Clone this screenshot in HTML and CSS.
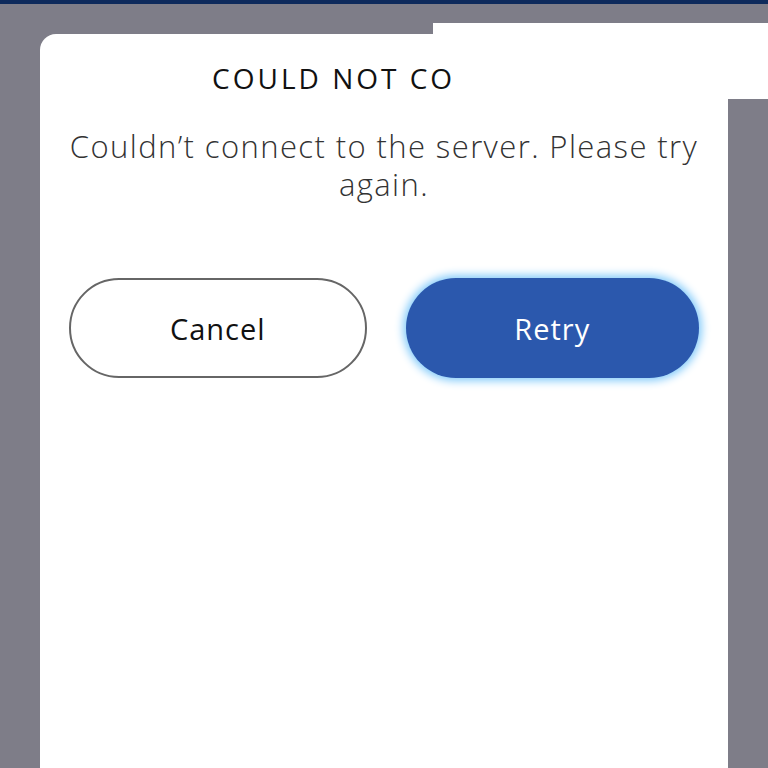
FILE: index.html
```html
<!DOCTYPE html>
<html lang="en">
<head>
<title>Connection error</title>
<meta charset="utf-8">
<meta name="viewport" content="width=device-width, initial-scale=1">
<link rel="stylesheet" href="styles.css">
</head>
<body>

<div class="topbar"></div>

<div class="dialog">
  <h2 class="dialog-title">COULD NOT CONNECT</h2>
  <p class="dialog-message">Couldn’t connect to the server. Please try again.</p>
  <div class="dialog-actions">
    <button class="btn btn-cancel" type="button">Cancel</button>
    <button class="btn btn-retry" type="button">Retry</button>
  </div>
</div>

<!-- white sheet sliding in behind the dialog -->
<div class="sheet"></div>

</body>
</html>
```

FILE: styles.css
```css
* {
  box-sizing: border-box;
}

body {
  font-family: "Open Sans", "Noto Sans", sans-serif;
  margin: 0;
  background-color: #7e7d88;
  overflow: hidden;
}

.topbar {
  height: 4px;
  background-color: #0e2a5c;
}

/* Dialog card */
.dialog {
  position: relative;
  z-index: 2;
  margin: 30px 40px 0;
  padding: 26px 29px 0;
  min-height: 734px;
  background-color: #fff;
  border-radius: 16px 16px 0 0;
  text-align: center;
}

.dialog-title {
  margin: 0;
  padding-left: 5px;
  font-size: 28px;
  font-weight: 500;
  line-height: 36px;
  letter-spacing: 3px;
  color: #111;
  clip-path: inset(0 242px 0 0);
}

.dialog-message {
  margin: 31px 0 0;
  font-size: 31px;
  font-weight: 300;
  line-height: 38px;
  letter-spacing: 1.4px;
  color: #333;
}

.dialog-actions {
  display: flex;
  gap: 39px;
  margin-top: 75px;
}

.btn {
  flex: 1;
  height: 100px;
  border-radius: 50px;
  font-family: inherit;
  font-size: 29px;
  font-weight: 400;
  letter-spacing: 1px;
  cursor: pointer;
}

.btn-cancel {
  background-color: #fff;
  border: 2px solid #666;
  color: #111;
}

.btn-retry {
  background-color: #2b58ad;
  border: none;
  color: #fff;
  box-shadow: 0 0 8px 3px #86ccfa;
}

.sheet {
  position: absolute;
  z-index: 1;
  left: 433px;
  top: 23px;
  width: 335px;
  height: 76px;
  background-color: #fff;
}
```
